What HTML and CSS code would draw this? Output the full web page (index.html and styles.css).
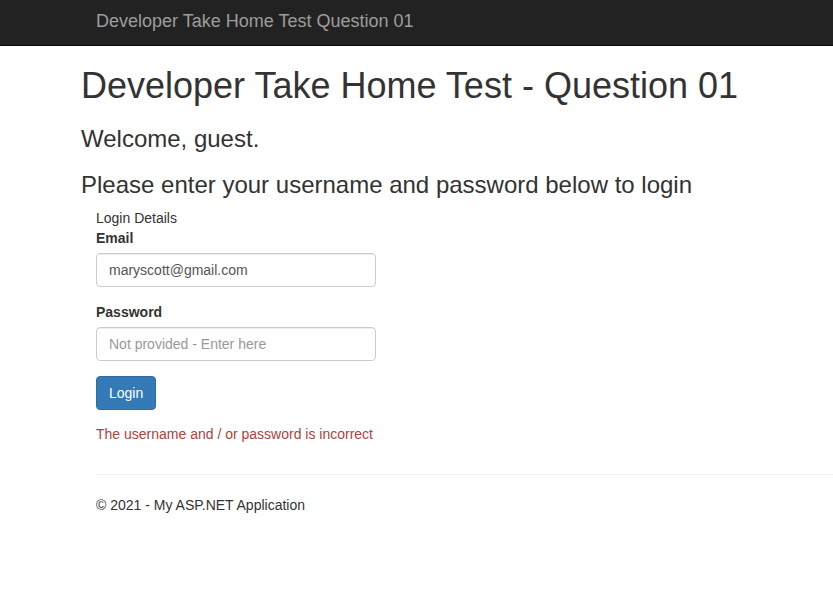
FILE: index.html
```html
<!DOCTYPE html>
<html lang="en">
<head>
<meta charset="utf-8">
<title>Developer Take Home Test Question 01</title>
<link rel="stylesheet" href="styles.css">
</head>
<body>
<nav class="navbar">
  <a class="brand" href="#">Developer Take Home Test Question 01</a>
</nav>
<main class="page">
  <h1 class="title">Developer Take Home Test - Question 01</h1>
  <h3 class="subtitle">Welcome, guest.</h3>
  <h3 class="subtitle">Please enter your username and password below to login</h3>
  <form class="login">
    <div class="legend">Login Details</div>
    <div class="form-group">
      <label class="label" for="email">Email</label>
      <input class="input" id="email" type="text" value="maryscott@gmail.com">
    </div>
    <div class="form-group">
      <label class="label" for="pw">Password</label>
      <input class="input" id="pw" type="password" placeholder="Not provided - Enter here">
    </div>
    <button class="btn" type="button">Login</button>
    <p class="error">The username and / or password is incorrect</p>
  </form>
  <footer class="footer">
    <hr class="rule">
    <p class="copy">© 2021 - My ASP.NET Application</p>
  </footer>
</main>
</body>
</html>
```
FILE: styles.css
```css
html, body {
  margin: 0;
  padding: 0;
}
body {
  font-family: "Liberation Sans", Arial, sans-serif;
  font-size: 14px;
  line-height: 20px;
  color: #333;
  background: #fff;
}
.navbar {
  height: 45px;
  background: #222;
  border-bottom: 1px solid #080808;
  padding-left: 96px;
}
.brand {
  display: block;
  padding-top: 11px;
  font-size: 18px;
  line-height: 20px;
  color: #9d9d9d;
  text-decoration: none;
}
.page {
  padding-left: 81px;
}
.title {
  margin: 20px 0 10px;
  font-size: 36px;
  font-weight: 500;
  line-height: 1.1;
}
.subtitle {
  margin: 20px 0 10px;
  font-size: 24px;
  font-weight: 500;
  line-height: 1.1;
}
.login {
  padding-left: 15px;
}
.legend {
  line-height: 20px;
}
.form-group {
  margin-bottom: 15px;
}
.label {
  display: block;
  font-weight: 700;
  margin-bottom: 5px;
}
.input {
  display: block;
  box-sizing: border-box;
  width: 280px;
  height: 34px;
  padding: 6px 12px;
  font-family: inherit;
  font-size: 14px;
  color: #555;
  border: 1px solid #ccc;
  border-radius: 4px;
  box-shadow: inset 0 1px 1px rgba(0,0,0,.075);
  margin: 0;
}
.input::placeholder {
  color: #999;
}
.btn {
  display: block;
  height: 34px;
  padding: 6px 12px;
  font-family: inherit;
  font-size: 14px;
  line-height: 20px;
  color: #fff;
  background: #337ab7;
  border: 1px solid #2e6da4;
  border-radius: 4px;
}
.error {
  margin: 14px 0 0;
  color: #a94442;
}
.footer {
  padding-left: 15px;
}
.rule {
  margin: 30px 0 20px;
  border: 0;
  border-top: 1px solid #eee;
}
.copy {
  margin: 0 0 10px;
}
```
